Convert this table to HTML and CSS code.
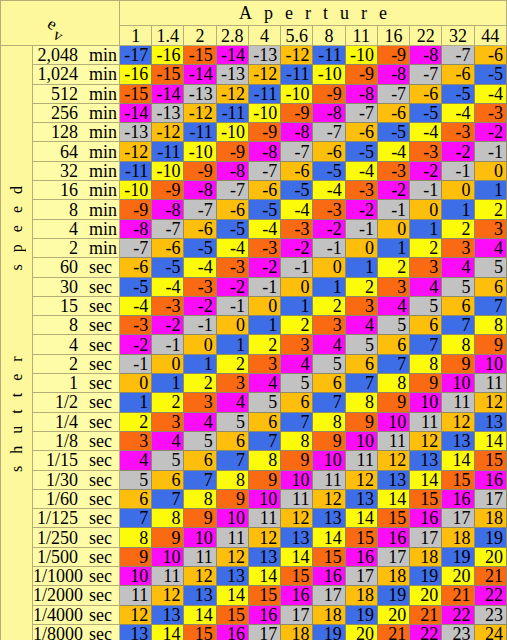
FILE: index.html
```html
<!DOCTYPE html>
<html lang="en">
<head>
    <meta charset="UTF-8">
    <meta name="viewport" content="width=device-width, initial-scale=1.0">
    <title>Exposure Values</title>
    <link rel="stylesheet" href="styles.css">
</head>
<body>
    <table class="ev-table">
        <colgroup>
            <col class="col-side">
            <col class="col-label">
            <col span="12" class="col-num">
        </colgroup>
        <thead>
            <tr class="head-top">
                <th class="corner" colspan="2" rowspan="2"><span class="ev">e<sub>v</sub></span></th>
                <th class="aperture" colspan="12">Aperture</th>
            </tr>
            <tr class="head-stops" id="stops"></tr>
        </thead>
        <tbody id="rows"></tbody>
    </table>
    <script src="script.js"></script>
</body>
</html>
```

FILE: script.js
```js
document.addEventListener("DOMContentLoaded", () => {
    const stops = ['1', '1.4', '2', '2.8', '4', '5.6', '8', '11', '16', '22', '32', '44'];
    const speeds = [
        ['2,048', 'min'], ['1,024', 'min'], ['512', 'min'], ['256', 'min'],
        ['128', 'min'], ['64', 'min'], ['32', 'min'], ['16', 'min'],
        ['8', 'min'], ['4', 'min'], ['2', 'min'],
        ['60', 'sec'], ['30', 'sec'], ['15', 'sec'], ['8', 'sec'],
        ['4', 'sec'], ['2', 'sec'], ['1', 'sec'],
        ['1/2', 'sec'], ['1/4', 'sec'], ['1/8', 'sec'], ['1/15', 'sec'],
        ['1/30', 'sec'], ['1/60', 'sec'], ['1/125', 'sec'], ['1/250', 'sec'],
        ['1/500', 'sec'], ['1/1000', 'sec'], ['1/2000', 'sec'],
        ['1/4000', 'sec'], ['1/8000', 'sec']
    ];
    const colors = ['blue', 'yellow', 'orange', 'magenta', 'gray', 'amber'];

    const stopRow = document.getElementById('stops');
    stops.forEach(stop => {
        const th = document.createElement('th');
        th.textContent = stop;
        stopRow.appendChild(th);
    });

    const body = document.getElementById('rows');
    speeds.forEach((speed, i) => {
        const tr = document.createElement('tr');

        if (i === 0) {
            const side = document.createElement('td');
            side.className = 'side';
            side.rowSpan = speeds.length;
            side.innerHTML = '<span class="side-text">shutter speed</span>';
            tr.appendChild(side);
        }

        const label = document.createElement('td');
        label.className = 'label';
        label.innerHTML = '<span class="amount">' + speed[0] + '</span><span class="unit">' + speed[1] + '</span>';
        tr.appendChild(label);

        stops.forEach((stop, j) => {
            const td = document.createElement('td');
            td.className = 'cell ' + colors[(i + j) % 6];
            td.textContent = i + j - 17;
            tr.appendChild(td);
        });

        body.appendChild(tr);
    });
});
```

FILE: styles.css
```css
body {
    margin: 0;
    background-color: #fdf89c;
    font-family: "Liberation Serif", "Times New Roman", serif;
}

.ev-table {
    width: 507px;
    border-collapse: collapse;
    table-layout: fixed;
    font-size: 18px;
    color: #000;
}

.col-side {
    width: 32px;
}

.col-label {
    width: 87px;
}

.ev-table th,
.ev-table td {
    border: 1px solid #b5ae78;
    padding: 0;
    font-weight: normal;
    line-height: 18px;
}

.head-top th {
    height: 24px;
}

.head-stops th {
    height: 19px;
    text-align: center;
}

.corner {
    text-align: left;
    vertical-align: top;
    padding: 16px 0 0 45px !important;
}

.ev {
    display: inline-block;
    font-size: 17px;
    transform: rotate(32deg);
}

.ev sub {
    font-size: 16px;
    vertical-align: -6px;
    margin-left: 3px;
}

.aperture {
    letter-spacing: 12px;
    text-align: center;
    padding-left: 12px !important;
}

.ev-table tbody td {
    height: 18.3px;
}

.side {
    vertical-align: top;
    text-align: center;
}

.side-text {
    display: inline-block;
    margin-top: 128px;
    font-size: 16px;
    writing-mode: vertical-rl;
    transform: rotate(180deg);
    letter-spacing: 12px;
    word-spacing: 58px;
}

.label {
    background-color: #fffca8;
    white-space: nowrap;
}

.amount {
    display: inline-block;
    width: 45px;
    text-align: right;
}

.unit {
    display: inline-block;
    margin-left: 11px;
}

.cell {
    text-align: right;
    padding-right: 3px !important;
    border-color: #8f8a6a !important;
}

.blue {
    background-color: #3d6ee8;
}

.yellow {
    background-color: #fcfc0a;
}

.orange {
    background-color: #f96a12;
}

.magenta {
    background-color: #fc0cf8;
}

.gray {
    background-color: #c2c2c2;
}

.amber {
    background-color: #fdbf0c;
}
```
